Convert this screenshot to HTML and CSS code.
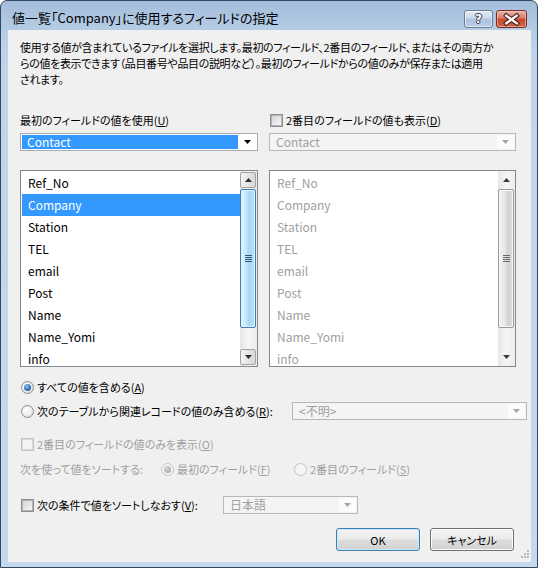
FILE: index.html
```html
<!DOCTYPE html>
<html lang="ja">
<head>
<meta charset="utf-8">
<title>値一覧</title>
<link rel="stylesheet" href="styles.css">
</head>
<body>
<div class="window">
  <div class="titlebar">
    <span class="title">値一覧「Company」に使用するフィールドの指定</span>
    <div class="tb-buttons">
      <div class="tb-btn help"><span class="q">?</span></div>
      <div class="tb-btn close">
        <svg width="30" height="17" viewBox="0 0 30 17"><path d="M9.5 4.5 L20.5 12.5 M20.5 4.5 L9.5 12.5" stroke="#4a2018" stroke-width="4.6" stroke-linecap="square" fill="none"/><path d="M9.5 4.5 L20.5 12.5 M20.5 4.5 L9.5 12.5" stroke="#ffffff" stroke-width="2.4" stroke-linecap="square" fill="none"/></svg>
      </div>
    </div>
  </div>
  <div class="content">
    <p class="desc">使用する値が含まれているファイルを選択します。最初のフィールド、2番目のフィールド、またはその両方か<br>らの値を表示できます（品目番号や品目の説明など）。最初のフィールドからの値のみが保存または適用<br>されます。</p>

    <div class="columns">
      <div class="label">最初のフィールドの値を使用(<u>U</u>)</div>
      <div class="label check-label"><span class="cb"></span><span class="cb-text">2番目のフィールドの値も表示(<u>D</u>)</span></div>

      <div class="combo">
        <span class="combo-sel">Contact</span>
        <span class="combo-arrow"><svg width="7" height="4" viewBox="0 0 7 4"><path d="M0 0H7L3.5 4Z" fill="#000"/></svg></span>
      </div>
      <div class="combo disabled">
        <span class="combo-text">Contact</span>
        <span class="combo-arrow"><svg width="7" height="4" viewBox="0 0 7 4"><path d="M0 0H7L3.5 4Z" fill="#a6a6a6"/></svg></span>
      </div>

      <div class="listbox">
        <div class="items">
          <div class="item">Ref_No</div>
          <div class="item selected">Company</div>
          <div class="item">Station</div>
          <div class="item">TEL</div>
          <div class="item">email</div>
          <div class="item">Post</div>
          <div class="item">Name</div>
          <div class="item">Name_Yomi</div>
          <div class="item">info</div>
        </div>
        <div class="vscroll">
          <div class="sb-btn"><svg width="7" height="4" viewBox="0 0 7 4"><path d="M0 4H7L3.5 0Z" fill="#2f2f2f"/></svg></div>
          <div class="sb-track"><div class="sb-thumb"><span class="grip"></span></div></div>
          <div class="sb-btn"><svg width="7" height="4" viewBox="0 0 7 4"><path d="M0 0H7L3.5 4Z" fill="#2f2f2f"/></svg></div>
        </div>
      </div>
      <div class="listbox disabled">
        <div class="items">
          <div class="item">Ref_No</div>
          <div class="item">Company</div>
          <div class="item">Station</div>
          <div class="item">TEL</div>
          <div class="item">email</div>
          <div class="item">Post</div>
          <div class="item">Name</div>
          <div class="item">Name_Yomi</div>
          <div class="item">info</div>
        </div>
        <div class="vscroll">
          <div class="sb-btn flat"><svg width="7" height="4" viewBox="0 0 7 4"><path d="M0 4H7L3.5 0Z" fill="#3a3a3a"/></svg></div>
          <div class="sb-track"><div class="sb-thumb"><span class="grip"></span></div></div>
          <div class="sb-btn flat"><svg width="7" height="4" viewBox="0 0 7 4"><path d="M0 0H7L3.5 4Z" fill="#3a3a3a"/></svg></div>
        </div>
      </div>
    </div>

    <div class="row r-all">
      <span class="radio checked"></span><span class="opt-text">すべての値を含める(<u>A</u>)</span>
    </div>
    <div class="row r-rel">
      <span class="radio"></span><span class="opt-text">次のテーブルから関連レコードの値のみ含める(<u>R</u>):</span>
      <div class="combo disabled rel-combo">
        <span class="combo-text">&lt;不明&gt;</span>
        <span class="combo-arrow"><svg width="7" height="4" viewBox="0 0 7 4"><path d="M0 0H7L3.5 4Z" fill="#a6a6a6"/></svg></span>
      </div>
    </div>
    <div class="row r-only gray">
      <span class="cb disabled"></span><span class="opt-text">2番目のフィールドの値のみを表示(<u>O</u>)</span>
    </div>
    <div class="row r-sort gray">
      <span class="sort-label">次を使って値をソートする:</span>
      <span class="sort-opt"><span class="radio disabled checked"></span><span class="opt-text">最初のフィールド(<u>F</u>)</span></span>
      <span class="sort-opt"><span class="radio disabled"></span><span class="opt-text">2番目のフィールド(<u>S</u>)</span></span>
    </div>
    <div class="row r-resort">
      <span class="cb"></span><span class="opt-text resort-text">次の条件で値をソートしなおす(<u>V</u>):</span>
      <div class="combo disabled lang-combo">
        <span class="combo-text">日本語</span>
        <span class="combo-arrow"><svg width="7" height="4" viewBox="0 0 7 4"><path d="M0 0H7L3.5 4Z" fill="#a6a6a6"/></svg></span>
      </div>
    </div>
    <div class="buttons">
      <div class="btn default">OK</div>
      <div class="btn">キャンセル</div>
    </div>
    <svg class="grip-corner" width="10" height="10" viewBox="0 0 10 10">
      <g fill="#b9b9b9">
        <rect x="8" y="0" width="2" height="2"/>
        <rect x="5" y="3" width="2" height="2"/><rect x="8" y="3" width="2" height="2"/>
        <rect x="2" y="6" width="2" height="2"/><rect x="5" y="6" width="2" height="2"/><rect x="8" y="6" width="2" height="2"/>
      </g>
    </svg>
  </div>
</div>
</body>
</html>
```

FILE: styles.css
```css
* { box-sizing: border-box; }
html, body { margin: 0; padding: 0; }
body {
  width: 538px;
  height: 568px;
  overflow: hidden;
  background: #ffffff;
  font-family: "Noto Sans CJK JP", sans-serif;
  font-size: 11px;
  color: #000;
  font-feature-settings: "palt";
}
u { text-decoration: underline; text-underline-offset: 1px; }

.window {
  width: 538px;
  height: 568px;
  border: 1px solid #34475c;
  border-radius: 7px 7px 0 0;
  background: linear-gradient(to bottom, #a3bddb 0, #b6cce5 29px, #c0d5ec 60px, #c4d8ee 100%);
  padding: 0 6px 5px 7px;
  display: flex;
  flex-direction: column;
}

.titlebar {
  height: 29px;
  flex: none;
  display: flex;
  align-items: flex-start;
}
.title {
  margin-left: 4px;
  margin-top: 8px;
  line-height: 18px;
  font-size: 13px;
  color: #000;
}
.tb-buttons {
  margin-left: auto;
  margin-top: 9px;
  margin-right: 4px;
  display: flex;
  gap: 3px;
}
.tb-btn {
  height: 18px;
  border-radius: 3px;
  display: flex;
  align-items: center;
  justify-content: center;
}
.help {
  width: 29px;
  border: 1px solid #6a7e96;
  background: linear-gradient(to bottom, #e3ebf5 0, #c9d8ea 45%, #aec3dc 50%, #b9cde4 100%);
  box-shadow: inset 0 0 0 1px rgba(255,255,255,0.55);
}
.help .q {
  font-family: "DejaVu Sans", sans-serif;
  font-weight: bold;
  font-size: 12px;
  line-height: 14px;
  color: #fff;
  text-shadow: 1px 0 0 #2d3f55, -1px 0 0 #2d3f55, 0 1px 0 #2d3f55, 0 -1px 0 #2d3f55;
}
.close {
  width: 31px;
  border: 1px solid #7a2b1e;
  background: linear-gradient(to bottom, #eab5aa 0, #d97a66 45%, #c4472b 50%, #d0654a 100%);
  box-shadow: inset 0 0 0 1px rgba(255,220,210,0.5);
  overflow: hidden;
}
.close svg { display: block; }

.content {
  flex: 1;
  position: relative;
  background: #f0f0f0;
  padding: 0 17px 0 12px;
}

.desc {
  margin: 9px 0 0;
  line-height: 16px;
  white-space: nowrap;
  letter-spacing: -0.35px;
}

.columns {
  margin-top: 25px;
  display: grid;
  grid-template-columns: 238px 247px;
  column-gap: 11px;
}
.label {
  height: 16px;
  line-height: 16px;
  white-space: nowrap;
}
.check-label {
  display: flex;
  align-items: center;
}
.check-label .cb { margin-left: 1px; }
.cb-text { margin-left: 3px; }

.combo {
  margin-top: 5px;
  height: 18px;
  border: 1px solid #a5acb5;
  background: #fff;
  display: flex;
  align-items: center;
  padding: 1px;
  font-size: 12px;
}
.combo-sel {
  height: 14px;
  line-height: 14px;
  width: 216px;
  background: #3399ff;
  color: #fff;
  padding-left: 5px;
}
.combo-arrow {
  margin-left: auto;
  width: 17px;
  height: 14px;
  display: flex;
  align-items: center;
  justify-content: center;
}
.combo-arrow svg { display: block; }
.combo.disabled {
  border-color: #b5b8bc;
  background: #f4f4f4;
  color: #a0a0a0;
}
.combo.disabled .combo-arrow { background: #fbfbfb; }
.combo-text { padding-left: 5px; line-height: 14px; }

.listbox {
  margin-top: 19px;
  height: 197px;
  border: 1px solid #828790;
  background: #fff;
  display: flex;
  overflow: hidden;
}
.items {
  flex: 1;
  padding: 1px 0 0 1px;
  overflow: hidden;
}
.item {
  height: 22px;
  line-height: 22px;
  padding-left: 6px;
  font-size: 12px;
  white-space: nowrap;
}
.item.selected { background: #3399ff; color: #fff; }
.listbox.disabled .item { color: #a0a0a0; }

.vscroll {
  width: 17px;
  flex: none;
  display: flex;
  flex-direction: column;
  padding: 1px 1px 1px 0;
  background: linear-gradient(to right, #e7e7e7, #f5f5f5 50%, #ececec);
}
.sb-btn {
  height: 16px;
  flex: none;
  border: 1px solid #a4a4a4;
  border-radius: 2px;
  background: linear-gradient(to right, #f4f4f4, #e6e6e6 50%, #d6d6d6);
  display: flex;
  align-items: center;
  justify-content: center;
}
.sb-btn.flat { border-color: transparent; background: transparent; }
.sb-track { flex: 1; padding: 1px 0; }
.sb-thumb {
  height: 139px;
  border: 1px solid #3c7fb1;
  border-radius: 2px;
  background: linear-gradient(to right, #e4f4fc 0, #cdebfb 30%, #a9d8f3 55%, #b8e0f6 100%);
  box-shadow: inset 0 0 0 1px #dff1fc;
  display: flex;
  align-items: center;
  justify-content: center;
}
.grip {
  width: 7px;
  height: 7px;
  background: repeating-linear-gradient(to bottom, #2e5a7a 0, #2e5a7a 1px, transparent 1px, transparent 2px);
}
.listbox.disabled .sb-thumb {
  border-color: #9b9b9b;
  background: linear-gradient(to right, #f4f4f4 0, #e6e6e6 45%, #d3d3d3 60%, #dcdcdc 100%);
  box-shadow: inset 0 0 0 1px #f7f7f7;
}
.listbox.disabled .grip {
  background: repeating-linear-gradient(to bottom, #6b6b6b 0, #6b6b6b 1px, transparent 1px, transparent 2px);
}

.row {
  display: flex;
  align-items: center;
  white-space: nowrap;
}
.r-all { margin-top: 12px; height: 16px; }
.r-rel { margin-top: 7px; height: 18px; }
.r-only { margin-top: 16px; height: 16px; }
.r-sort { margin-top: 9px; height: 16px; }
.r-resort { margin-top: 19px; height: 18px; }
.gray { color: #a0a0a0; }

.opt-text { margin-left: 3px; line-height: 16px; }

.radio {
  width: 13px;
  height: 13px;
  margin-left: 1px;
  flex: none;
  border-radius: 50%;
  border: 1px solid #8e8f8f;
  background: radial-gradient(circle at 40% 40%, #ffffff 0, #f0f0f0 45%, #cfcfcf 100%);
  display: flex;
  align-items: center;
  justify-content: center;
}
.radio.checked::after {
  content: "";
  width: 7px;
  height: 7px;
  border-radius: 50%;
  background: radial-gradient(circle at 40% 35%, #8dc3ef 0, #3a7cc1 50%, #1a3f6e 100%);
}
.radio.disabled {
  border-color: #c4c4c4;
  background: #f4f4f4;
}
.radio.disabled.checked::after {
  background: radial-gradient(circle at 40% 35%, #d6d6d6 0, #b4b4b4 60%, #9c9c9c 100%);
}

.cb {
  width: 13px;
  height: 13px;
  flex: none;
  margin-left: 1px;
  border: 1px solid #8e8f8f;
  background: #f4f4f4;
  display: flex;
  align-items: center;
  justify-content: center;
}
.cb::after {
  content: "";
  width: 9px;
  height: 9px;
  border: 1px solid #b3b3b3;
  background: linear-gradient(135deg, #d4d4d4, #f6f6f6);
}
.cb.disabled { border-color: #c2c2c2; }
.cb.disabled::after { border-color: #dadada; background: #f4f4f4; }

.rel-combo {
  margin-top: 0;
  margin-left: auto;
  margin-right: -13px;
  width: 235px;
}
.sort-label { width: 140px; }
.sort-opt { display: flex; align-items: center; width: 133px; }
.resort-text { width: 186px; }
.lang-combo { margin-top: 0; width: 135px; }

.buttons {
  margin-top: 14px;
  display: flex;
  justify-content: flex-end;
  gap: 10px;
}
.btn {
  width: 84px;
  height: 23px;
  border: 1px solid #707070;
  border-radius: 3px;
  background: linear-gradient(to bottom, #f3f3f3 0, #ebebeb 48%, #dddddd 52%, #d1d1d1 100%);
  box-shadow: inset 0 0 0 1px #fbfbfb;
  display: flex;
  align-items: center;
  justify-content: center;
  line-height: 16px;
}
.btn.default {
  border-color: #3c7fb1;
  box-shadow: inset 0 0 0 1px #c8ebfb;
}

.grip-corner {
  position: absolute;
  right: 2px;
  bottom: 2px;
}
```
